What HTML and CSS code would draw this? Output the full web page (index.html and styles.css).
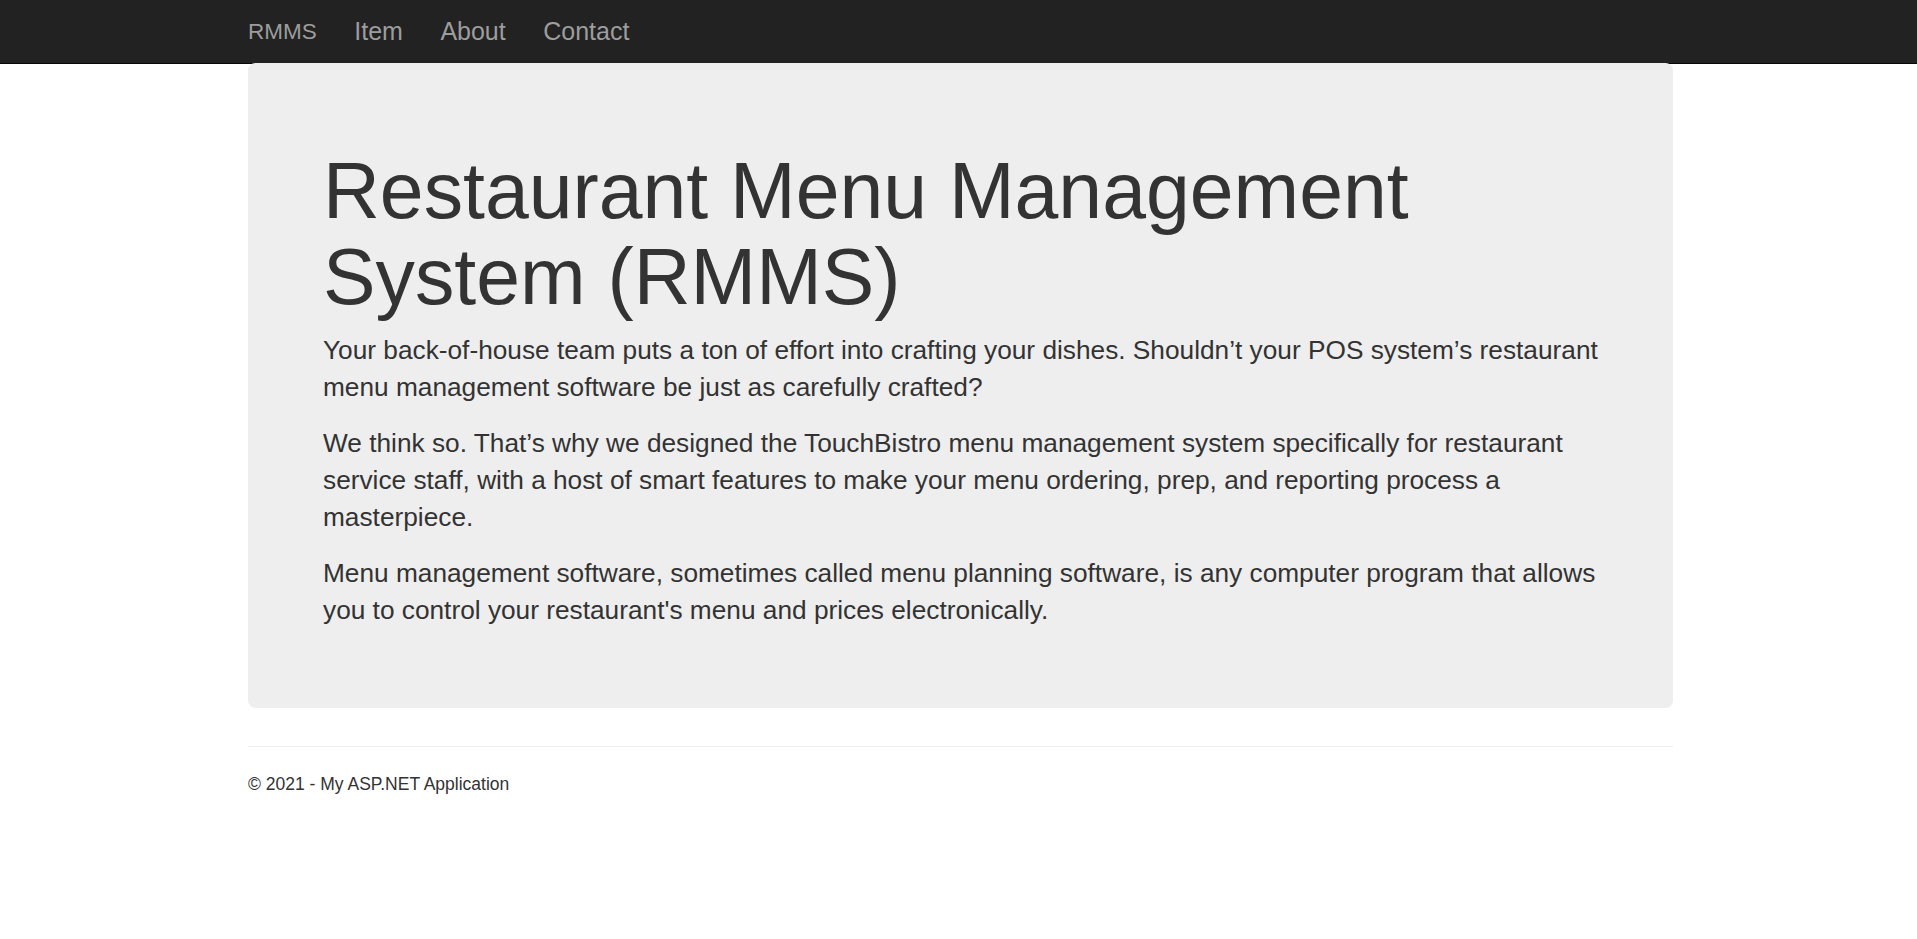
FILE: index.html
```html
<!DOCTYPE html>
<html lang="en">
<head>
<meta charset="utf-8">
<title>Home Page - RMMS</title>
<link rel="stylesheet" href="styles.css">
</head>
<body>
<nav class="navbar">
  <div class="container nav-inner">
    <a class="brand" href="#">RMMS</a>
    <ul class="nav-links">
      <li><a href="#">Item</a></li>
      <li><a href="#">About</a></li>
      <li><a href="#">Contact</a></li>
    </ul>
  </div>
</nav>
<div class="container body-content">
  <div class="jumbotron">
    <h1>Restaurant Menu Management System (RMMS)</h1>
    <p>Your back-of-house team puts a ton of effort into crafting your dishes. Shouldn’t your POS system’s restaurant menu management software be just as carefully crafted?</p>
    <p>We think so. That’s why we designed the TouchBistro menu management system specifically for restaurant service staff, with a host of smart features to make your menu ordering, prep, and reporting process a masterpiece.</p>
    <p>Menu management software, sometimes called menu planning software, is any computer program that allows you to control your restaurant's menu and prices electronically.</p>
  </div>
  <hr class="divider">
  <footer class="footer">
    <p>© 2021 - My ASP.NET Application</p>
  </footer>
</div>
</body>
</html>
```
FILE: styles.css
```css
* { box-sizing: border-box; }
html, body { margin: 0; padding: 0; }
body {
  font-family: "Liberation Sans", Arial, Helvetica, sans-serif;
  font-size: 17.5px;
  line-height: 1.428571;
  color: #333;
  background: #fff;
}
a { text-decoration: none; }
.container {
  width: 1462.5px;
  margin-left: calc((100% - 1462.5px) / 2 + 2px);
  margin-right: auto;
  padding: 0 18.75px;
}
.navbar {
  background: #222;
  border-bottom: 1px solid #080808;
  height: 63.5px;
}
.nav-inner {
  display: flex;
  align-items: stretch;
  height: 62.5px;
}
.brand {
  color: #9d9d9d;
  font-size: 22.5px;
  line-height: 25px;
  padding: 18.75px 18.75px;
  margin-left: -18.75px;
}
.nav-links {
  display: flex;
  list-style: none;
  margin: 0;
  padding: 0;
}
.nav-links a {
  display: block;
  color: #9d9d9d;
  font-size: 25px;
  line-height: 25px;
  padding: 18.75px 18.75px;
}
.jumbotron {
  background: #eee;
  border-radius: 7.5px;
  padding: 60px 75px;
  margin-top: -1px;
  margin-bottom: 37.5px;
}
.jumbotron h1 {
  font-size: 78.75px;
  line-height: 1.1;
  font-weight: 500;
  margin: 25px 0 11.5px;
}
.jumbotron p {
  font-size: 26.25px;
  line-height: 1.4;
  font-weight: 200;
  margin: 0 0 19.5px;
}
.divider {
  border: 0;
  border-top: 1px solid #eee;
  margin: 25px 0;
}
.footer p {
  margin: 0 0 12.5px;
  font-size: 17.5px;
  line-height: 25px;
}
```
